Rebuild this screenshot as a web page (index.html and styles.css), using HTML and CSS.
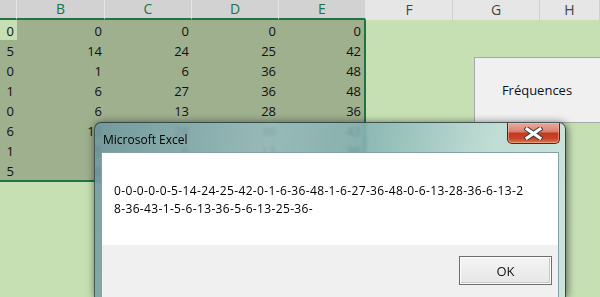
FILE: index.html
```html
<!DOCTYPE html>
<html lang="fr">
<head>
    <meta charset="UTF-8">
    <title>Fréquences - Excel</title>
    <link rel="stylesheet" href="styles.css">
</head>
<body>
    <div class="sheet">
        <div class="col-heads">
            <div class="head sel"></div>
            <div class="head sel">B</div>
            <div class="head sel">C</div>
            <div class="head sel">D</div>
            <div class="head sel">E</div>
            <div class="head">F</div>
            <div class="head">G</div>
            <div class="head">H</div>
        </div>

        <div class="range">
            <div class="cell active">0</div><div class="cell">0</div><div class="cell">0</div><div class="cell">0</div><div class="cell">0</div>
            <div class="cell">5</div><div class="cell">14</div><div class="cell">24</div><div class="cell">25</div><div class="cell">42</div>
            <div class="cell">0</div><div class="cell">1</div><div class="cell">6</div><div class="cell">36</div><div class="cell">48</div>
            <div class="cell">1</div><div class="cell">6</div><div class="cell">27</div><div class="cell">36</div><div class="cell">48</div>
            <div class="cell">0</div><div class="cell">6</div><div class="cell">13</div><div class="cell">28</div><div class="cell">36</div>
            <div class="cell">6</div><div class="cell">13</div><div class="cell">28</div><div class="cell">36</div><div class="cell">43</div>
            <div class="cell">1</div><div class="cell">5</div><div class="cell">6</div><div class="cell">13</div><div class="cell">36</div>
            <div class="cell">5</div><div class="cell">6</div><div class="cell">13</div><div class="cell">25</div><div class="cell">36</div>
        </div>

        <!-- form button sitting over cells G/H -->
        <button class="form-btn">Fréquences</button>

        <div class="msgbox">
            <div class="titlebar">
                <span class="title">Microsoft Excel</span>
                <button class="close" aria-label="Fermer">
                    <svg width="19" height="13" viewBox="0 0 19 13">
                        <path d="M3 2 L16 11 M16 2 L3 11" stroke="#3c3c3c" stroke-width="5" stroke-linecap="square"/>
                        <path d="M3 2 L16 11 M16 2 L3 11" stroke="#fff" stroke-width="3" stroke-linecap="square"/>
                    </svg>
                </button>
            </div>
            <div class="client">
                <div class="message">0-0-0-0-0-5-14-24-25-42-0-1-6-36-48-1-6-27-36-48-0-6-13-28-36-6-13-2<br>8-36-43-1-5-6-13-36-5-6-13-25-36-</div>
                <div class="buttons">
                    <button class="ok">OK</button>
                </div>
            </div>
        </div>
    </div>
</body>
</html>
```
FILE: styles.css
```css
body {
    margin: 0;
    background-color: #c6e0b4; /* cell fill */
    font-family: 'Open Sans', 'Liberation Sans', sans-serif;
    overflow: hidden;
}
.sheet {
    position: relative;
    width: 600px;
    height: 297px;
    overflow: hidden;
}
.col-heads {
    display: grid;
    grid-template-columns: 17px 88px 87px 87px 87px 87px 87px 1fr;
    height: 20px;
}
.head {
    background-color: #e6e6e6;
    border-right: 1px solid #d0d0d0;
    color: #444;
    font-size: 14px;
    line-height: 20px;
    text-align: center;
}
.head.sel {
    background-color: #d2d2d2;
    border-right-color: #e4e4e4;
    border-bottom: 2px solid #217346;
    color: #217346;
    line-height: 18px;
}
.range {
    display: grid;
    grid-template-columns: 17px 88px 87px 87px 85px;
    grid-auto-rows: 20px;
    width: 364px;
    background-color: #9eb08e;
    border-right: 2px solid #217346;
    border-bottom: 2px solid #217346;
    font-size: 13px;
    color: #111;
}
.cell {
    padding: 3px 3px 0 0;
    line-height: 17px;
    text-align: right;
}
.cell.active {
    background-color: #c6e0b4;
}
.form-btn {
    position: absolute;
    left: 474px;
    top: 57px;
    width: 130px;
    height: 66px;
    margin: 0;
    padding: 0 4px 0 0;
    background-color: #f0f0f0;
    border: 1px solid #a8a8a8;
    font-family: 'Open Sans', sans-serif;
    font-size: 13px;
    color: #111;
    text-align: center;
}

/* message box, Windows 7 glass frame */
.msgbox {
    position: absolute;
    left: 94px;
    top: 122px;
    width: 472px;
    height: 175px;
    padding: 0 6px 0 6px;
    box-sizing: border-box;
    border: 1px solid rgba(30, 40, 45, 0.75);
    border-bottom: none;
    border-radius: 7px 7px 0 0;
    background: linear-gradient(100deg, rgba(110, 150, 158, 0.86) 0%, rgba(150, 188, 192, 0.84) 35%, rgba(130, 176, 180, 0.82) 55%, rgba(190, 220, 218, 0.86) 80%, rgba(205, 228, 226, 0.88) 100%);
    box-shadow: 1px 1px 9px rgba(0, 0, 0, 0.6);
    backdrop-filter: blur(1.5px);
    overflow: hidden;
}
.titlebar {
    display: flex;
    justify-content: space-between;
    align-items: flex-start;
    height: 29px;
}
.title {
    padding: 9px 0 0 2px;
    font-size: 12px;
    line-height: 16px;
    color: #000;
}
.close {
    width: 53px;
    height: 21px;
    margin: 0 -1px 0 0;
    padding: 0;
    border: 1px solid #5c2219;
    border-top: none;
    border-radius: 0 0 5px 5px;
    background: linear-gradient(#e8aa9c 0%, #d98472 42%, #c33a20 52%, #c8452a 78%, #df7c4e 100%);
    box-shadow: inset 0 0 0 1px rgba(255, 200, 190, 0.45);
    display: flex;
    align-items: center;
    justify-content: center;
}
.close svg {
    display: block;
}
.client {
    border: 1px solid #84a2a4;
    border-bottom: none;
    background-color: #fff;
}
.message {
    height: 92px;
    box-sizing: border-box;
    padding: 29px 12px 0 12px;
    font-size: 12px;
    line-height: 18px;
    letter-spacing: 0.35px;
    color: #000;
}
.buttons {
    display: flex;
    justify-content: flex-end;
    height: 53px;
    padding: 11px 6px 0 0;
    box-sizing: border-box;
    background-color: #f0f0f0;
}
.ok {
    width: 93px;
    height: 29px;
    margin: 0;
    background: linear-gradient(#f4f4f4, #e6e6e6);
    border: 1px solid #6e6e6e;
    box-shadow: inset 0 0 0 1px #fcfcfc, inset -1px -1px 0 1px #c8c8c8;
    font-family: 'Open Sans', sans-serif;
    font-size: 13px;
    color: #111;
}
```
